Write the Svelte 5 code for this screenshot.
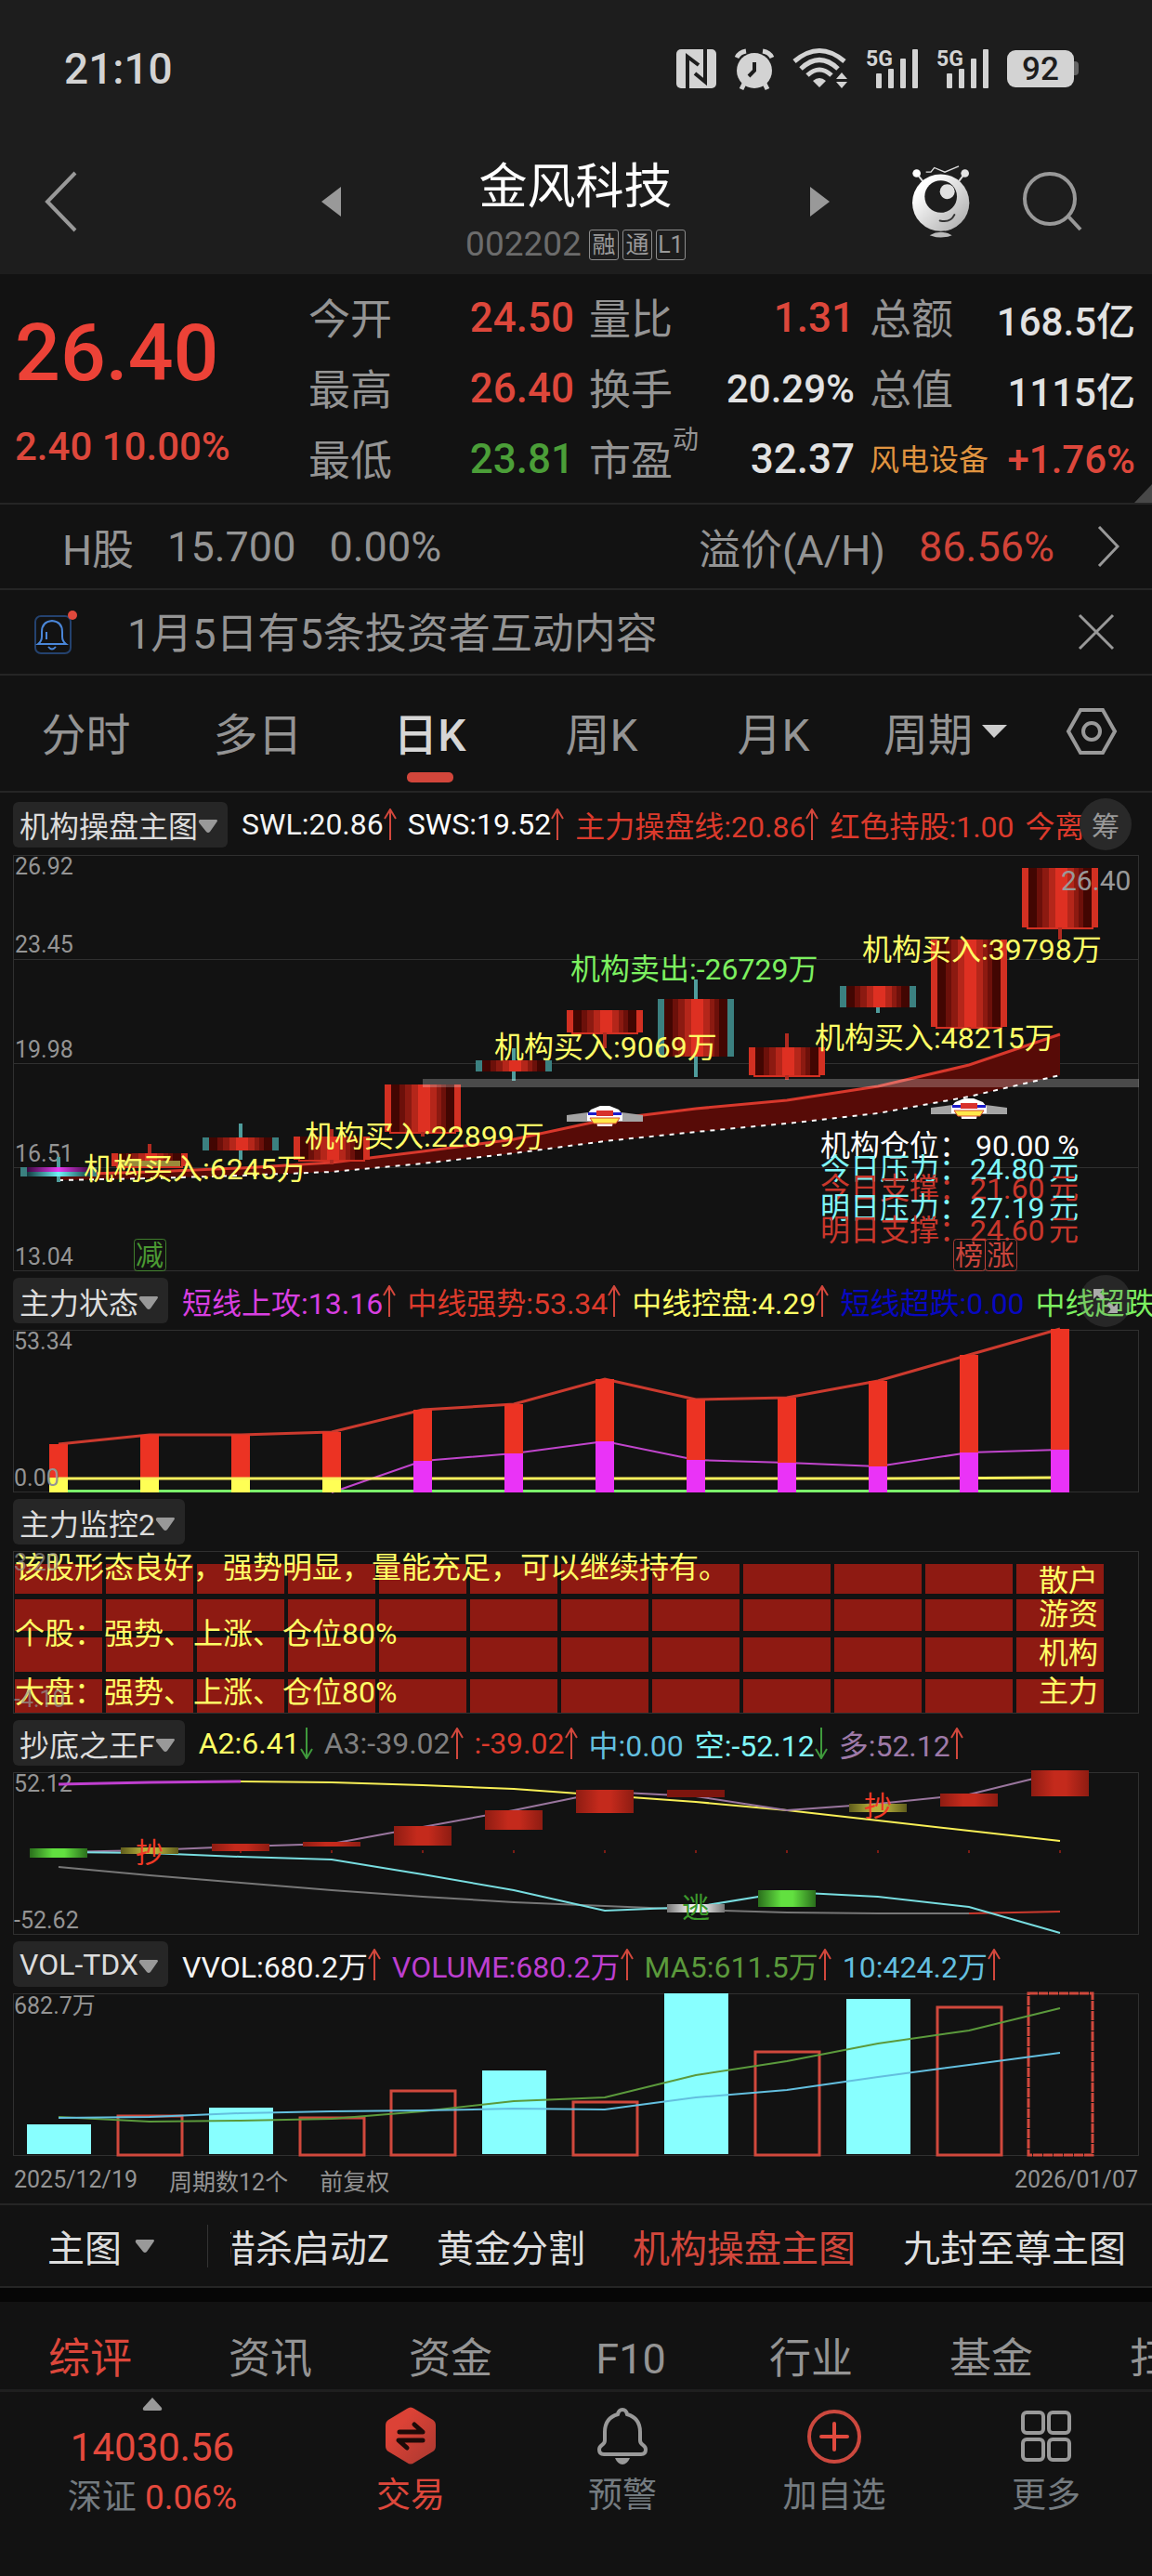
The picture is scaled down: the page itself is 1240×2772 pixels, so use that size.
<script lang="ts">
	type Arrow = 'up' | 'down' | '';
	type Reading = { text: string; color: string; arrow: Arrow };

	const quotes = [
		{ label: '今开', value: '24.50', tone: 'red' },
		{ label: '量比', value: '1.31', tone: 'red' },
		{ label: '总额', value: '168.5亿', tone: 'mid' },
		{ label: '最高', value: '26.40', tone: 'red' },
		{ label: '换手', value: '20.29%', tone: 'mid' },
		{ label: '总值', value: '1115亿', tone: 'mid' },
		{ label: '最低', value: '23.81', tone: 'green' },
		{ label: '市盈', sup: '动', value: '32.37', tone: '' },
		{ label: '风电设备', sector: true, value: '+1.76%', tone: 'red mid' }
	];

	const periods = ['分时', '多日', '日K', '周K', '月K'];
	const presets = ['猎杀启动Z', '黄金分割', '机构操盘主图', '九封至尊主图'];
	const sections = ['综评', '资讯', '资金', 'F10', '行业', '基金', '扫雷'];

	const mainReadings: Reading[] = [
		{ text: 'SWL:20.86', color: '#f4f4f4', arrow: 'up' },
		{ text: 'SWS:19.52', color: '#fff', arrow: 'up' },
		{ text: '主力操盘线:20.86', color: '#dc3a2c', arrow: 'up' },
		{ text: '红色持股:1.00', color: '#dc3a2c', arrow: '' },
		{ text: '今离', color: '#dc3a2c', arrow: '' }
	];
	const stateReadings: Reading[] = [
		{ text: '短线上攻:13.16', color: '#d83fe0', arrow: 'up' },
		{ text: '中线强势:53.34', color: '#dc3a2c', arrow: 'up' },
		{ text: '中线控盘:4.29', color: '#ffff66', arrow: 'up' },
		{ text: '短线超跌:0.00', color: '#0808c0', arrow: '' },
		{ text: '中线超跌', color: '#7cf060', arrow: '' }
	];
	const bottomReadings: Reading[] = [
		{ text: 'A2:6.41', color: '#ffff66', arrow: 'down' },
		{ text: 'A3:-39.02', color: '#808080', arrow: 'up' },
		{ text: ':-39.02', color: '#dc3a2c', arrow: 'up' },
		{ text: '中:0.00', color: '#63bfdf', arrow: '' },
		{ text: '空:-52.12', color: '#7ff6f8', arrow: 'down' },
		{ text: '多:52.12', color: '#9e7aa8', arrow: 'up' }
	];
	const volReadings: Reading[] = [
		{ text: 'VVOL:680.2万', color: '#f4f4f4', arrow: 'up' },
		{ text: 'VOLUME:680.2万', color: '#bd3fd0', arrow: 'up' },
		{ text: 'MA5:611.5万', color: '#5b9a3c', arrow: 'up' },
		{ text: '10:424.2万', color: '#63bfdf', arrow: 'up' }
	];

	// every chart shares the same twelve columns
	const cx = (i: number) => 49 + 98 * i;
	const line = (ys: number[], from = 0) => ys.map((y, i) => `${cx(i + from)},${y}`).join(' ');

	// [body top, body bottom, wick top, wick bottom, rising]
	const candles: [number, number, number, number, boolean][] = [
		[336, 346, 325, 352, false],
		[321, 335, 311, 335, true],
		[304, 318, 289, 328, false],
		[303, 328, 295, 333, true],
		[247, 298, 247, 303, true],
		[221, 233, 208, 243, false],
		[167, 191, 167, 208, true],
		[155, 217, 134, 239, false],
		[207, 237, 192, 242, true],
		[141, 164, 141, 170, false],
		[91, 185, 91, 190, true],
		[14, 78, 14, 91, true]
	];
	const upper = [344, 341, 337, 331, 319, 306, 285, 273, 264, 249, 226, 193];
	const lower = [350, 348, 345, 341, 332, 321, 308, 298, 289, 278, 260, 237];
	const band = `${line(upper)} ${lower.map((y, i) => `${cx(i)},${y}`).reverse().join(' ')}`;

	const axis = [
		{ y: 21, text: '26.92' },
		{ y: 105, text: '23.45' },
		{ y: 218, text: '19.98' },
		{ y: 330, text: '16.51' },
		{ y: 441, text: '13.04' }
	];
	const flows = [
		{ x: 76, y: 349, text: '机构买入:6245万' },
		{ x: 314, y: 314, text: '机构买入:22899万' },
		{ x: 518, y: 218, text: '机构买入:9069万' },
		{ x: 600, y: 134, text: '机构卖出:-26729万', sell: true },
		{ x: 914, y: 113, text: '机构买入:39798万' },
		{ x: 863, y: 208, text: '机构买入:48215万' }
	];
	const levels = [
		{ y: 349, label: '今日压力：', value: '24.80', color: '#7ff6f8' },
		{ y: 370, label: '今日支撑：', value: '21.60', color: '#c9372c' },
		{ y: 391, label: '明日压力：', value: '27.19', color: '#7ff6f8' },
		{ y: 415, label: '明日支撑：', value: '24.60', color: '#c9372c' }
	];
	const marks = [
		{ x: 130, text: '减', color: '#4b9a33' },
		{ x: 1012, text: '榜', color: '#c9453c' },
		{ x: 1046, text: '涨', color: '#c9453c' }
	];

	const strong = [123, 113, 113, 110, 86, 80, 53, 75, 73, 55, 27, -1];
	const attack = [141, 133, 120, 140, 143, 147, 132, 129];

	const heat = [
		{ y: 14, h: 32 },
		{ y: 52, h: 34 },
		{ y: 93, h: 37 },
		{ y: 138, h: 36 }
	];
	const heatLabels = [
		{ y: 43, text: '散户' },
		{ y: 79, text: '游资' },
		{ y: 121, text: '机构' },
		{ y: 162, text: '主力' }
	];

	const boxes = [
		{ i: 0, y: 82, h: 10, fill: 'green' },
		{ i: 1, y: 81, h: 7, fill: 'olive' },
		{ i: 2, y: 77, h: 8, fill: 'red' },
		{ i: 3, y: 75, h: 5, fill: 'red' },
		{ i: 4, y: 58, h: 21, fill: 'red' },
		{ i: 5, y: 41, h: 21, fill: 'red' },
		{ i: 6, y: 19, h: 25, fill: 'red' },
		{ i: 7, y: 19, h: 8, fill: 'dark' },
		{ i: 7, y: 142, h: 9, fill: 'white' },
		{ i: 8, y: 127, h: 18, fill: 'green' },
		{ i: 9, y: 34, h: 9, fill: 'olive' },
		{ i: 10, y: 23, h: 14, fill: 'red' },
		{ i: 11, y: -2, h: 28, fill: 'red' }
	];
	const bull = [86, 84, 80, 77, 59, 41, 21, 26, 41, 34, 24, 0];
	const bear = [86, 87, 91, 94, 110, 127, 149, 145, 129, 134, 145, 173];
	const a2 = [10, 11, 14, 18, 25, 32, 41, 52, 63, 74];
	const a3 = [102, 111, 119, 127, 134, 140, 144, 148, 151, 152, 152];

	const volumes = [
		{ top: 141, up: false },
		{ top: 132, up: true },
		{ top: 123, up: false },
		{ top: 134, up: true },
		{ top: 105, up: true },
		{ top: 83, up: false },
		{ top: 117, up: true },
		{ top: 0, up: false },
		{ top: 63, up: true },
		{ top: 6, up: false },
		{ top: 15, up: true },
		{ top: 0, up: true }
	];
	const ma5 = [133, 138, 137, 135, 127, 116, 112, 88, 73, 54, 40, 16];
	const ma10 = [134, 133, 129, 127, 126, 124, 125, 112, 104, 90, 77, 64];
</script>

{#snippet readings(items: Reading[])}
	<p class="readings">
		{#each items as item}
			<span style:color={item.color}
				>{item.text}{#if item.arrow}<svg class="arrow {item.arrow}" width="14" height="34" viewBox="0 0 14 34"
						><path d="M7 34V1M1 11L7 1l6 10" /></svg
					>{/if}</span
			>
		{/each}
	</p>
{/snippet}

{#snippet picker(name: string)}
	<button class="picker" type="button"
		>{name}<svg width="22" height="16" viewBox="0 0 22 16"><path d="M2 1h18q2 1 0 3l-7 10q-2 2-4 0L1 4q-1-2 1-3" /></svg></button
	>
{/snippet}

{#snippet signal()}
	<svg width="57" height="44" viewBox="0 0 57 44">
		<text class="net" x="0" y="19">5G</text>
		<rect x="11" y="27" width="6" height="16" rx="1" />
		<rect x="24" y="22" width="6" height="21" rx="1" />
		<rect x="37" y="11" width="6" height="32" rx="1" />
		<rect x="50" y="1" width="6" height="42" rx="1" />
	</svg>
{/snippet}

<main>
	<header>
		<div class="status">
			<time>21:10</time>
			<div class="status-icons">
				<svg width="43" height="42" viewBox="0 0 43 42">
					<rect width="43" height="42" rx="5" />
					<path class="cut" d="M12 42V8l12 9M31 0v35L20 26" />
				</svg>
				<svg class="alarm" width="44" height="44" viewBox="0 0 44 44">
					<circle cx="22" cy="24" r="19" />
					<path class="stroke" d="M3 10q3-6 10-7M41 10q-3-6-10-7M11 38l-3 6M33 38l3 6" />
					<path class="cut" d="M22 15v9l-6 6" />
				</svg>
				<svg class="wifi" width="60" height="44" viewBox="0 0 60 44">
					<path class="arc" d="M2 14Q29-9 56 14M9 22Q29 3 49 22M16 29Q29 17 42 29" />
					<path d="M22 35q7-6 14 0l-7 7zM53 26l6 7H47zM47 36h12l-6 7z" />
				</svg>
				{@render signal()}
				{@render signal()}
				<svg class="battery" width="77" height="40" viewBox="0 0 77 40">
					<rect x="66" y="12" width="11" height="15" rx="4" fill="#666" />
					<rect width="72" height="40" rx="9" />
					<text x="36" y="32">92</text>
				</svg>
			</div>
		</div>
		<nav class="title-bar">
			<div class="side">
				<button class="back" type="button" aria-label="返回">
					<svg width="36" height="66" viewBox="0 0 36 66"><path class="thin" d="M33 2L3 33l30 31" /></svg>
				</button>
				<button type="button" aria-label="上一只">
					<svg width="21" height="32" viewBox="0 0 21 32"><path fill="#999" d="M21 0v32L0 16z" /></svg>
				</button>
			</div>
			<div class="stock">
				<h1>金风科技</h1>
				<p>002202<i>融</i><i>通</i><i>L1</i></p>
			</div>
			<div class="side right">
				<button type="button" aria-label="下一只">
					<svg width="21" height="32" viewBox="0 0 21 32"><path fill="#999" d="M0 0v32l21-16z" /></svg>
				</button>
				<button class="robot" type="button" aria-label="助手">
					<svg width="62" height="78" viewBox="0 0 186 233">
						<defs>
							<linearGradient id="robot" x1="0" y1="0" x2="1" y2="1">
								<stop offset="0.2" stop-color="#fff" /><stop offset="0.9" stop-color="#b0b0b0" />
							</linearGradient>
						</defs>
						<path d="M14 25l20 26M170 25l-20 26" stroke="#ddd" stroke-width="6" />
						<path d="M44 21h16l11-14 34 14 45-19" fill="none" stroke="#ddd" stroke-width="4" />
						<circle cx="14" cy="25" r="13" fill="#fff" />
						<circle cx="170" cy="25" r="13" fill="#e4e4e4" />
						<circle cx="92" cy="120" r="92" fill="url(#robot)" />
						<circle cx="92" cy="100" r="52" fill="#1d1d1d" />
						<circle cx="113" cy="84" r="24" fill="#e0e0e0" />
						<path d="M89 178q34 8 47-19" fill="none" stroke="#333" stroke-width="6" stroke-linecap="round" />
						<path d="M56 225q36-20 72 0-36 14-72 0" fill="#bbb" />
					</svg>
				</button>
				<button type="button" aria-label="搜索">
					<svg width="66" height="66" viewBox="0 0 66 66">
						<circle class="thin" cx="30" cy="30" r="27" />
						<path class="thin" d="M50 49l13 14" />
					</svg>
				</button>
			</div>
		</nav>
	</header>

	<section class="quote">
		<div class="price">
			<strong>26.40</strong>
			<span>2.40 10.00%</span>
		</div>
		<dl>
			{#each quotes as q}
				<div>
					<dt class:sector={q.sector}>{q.label}{#if q.sup}<sup>{q.sup}</sup>{/if}</dt>
					<dd class={q.tone}>{q.value}</dd>
				</div>
			{/each}
		</dl>
	</section>

	<a class="premium" href="#ah">
		<span>H股</span><span>15.700</span><span>0.00%</span>
		<span class="ratio">溢价(A/H)</span><b>86.56%</b>
		<svg width="24" height="44" viewBox="0 0 24 44"><path class="thin" d="M2 1l20 21L2 43" /></svg>
	</a>

	<div class="notice">
		<svg width="46" height="50" viewBox="0 0 46 50">
			<rect x="1" y="8" width="38" height="40" rx="6" fill="none" stroke="#24426f" stroke-width="2" />
			<path d="M4 38q4-3 4-8v-5q0-11 11-12 11 1 11 12v5q0 5 4 8zM15 41q4 5 8 0M13 25v8" fill="none" stroke="#4a86d8" stroke-width="2" />
			<circle cx="41" cy="7" r="5" fill="#e0483c" />
		</svg>
		<span>1月5日有5条投资者互动内容</span>
		<button type="button" aria-label="关闭">
			<svg width="40" height="40" viewBox="0 0 40 40"><path class="thin" d="M2 2l36 36M38 2L2 38" /></svg>
		</button>
	</div>

	<nav class="periods">
		{#each periods as p}
			<button type="button" class:active={p === '日K'}>{p}</button>
		{/each}
		<button type="button">周期<svg width="27" height="14" viewBox="0 0 27 14"><path fill="#ccc" d="M0 0h27L13 14z" /></svg></button>
		<button class="settings" type="button" aria-label="设置">
			<svg width="56" height="50" viewBox="0 0 56 50">
				<path class="thin" d="M16 2h24l13 23-13 23H16L3 25z" />
				<circle class="thin" cx="28" cy="25" r="9" />
			</svg>
		</button>
	</nav>

	<section class="panel main-panel">
		<div class="panel-head">
			{@render picker('机构操盘主图')}
			{@render readings(mainReadings)}
			<button class="round" type="button">筹</button>
		</div>
		<svg class="chart" viewBox="0 0 1212 448">
			<defs>
				<linearGradient id="candle">
					<stop offset="0" stop-color="#420602" /><stop offset="0.13" stop-color="#420602" />
					<stop offset="0.13" stop-color="#6c100a" /><stop offset="0.22" stop-color="#6c100a" />
					<stop offset="0.22" stop-color="#8c1a11" /><stop offset="0.32" stop-color="#8c1a11" />
					<stop offset="0.32" stop-color="#b4261a" /><stop offset="0.42" stop-color="#b4261a" />
					<stop offset="0.42" stop-color="#de3022" /><stop offset="0.62" stop-color="#de3022" />
					<stop offset="0.62" stop-color="#b4261a" /><stop offset="0.72" stop-color="#b4261a" />
					<stop offset="0.72" stop-color="#8c1a11" /><stop offset="0.8" stop-color="#8c1a11" />
					<stop offset="0.8" stop-color="#6c100a" /><stop offset="0.87" stop-color="#6c100a" />
					<stop offset="0.87" stop-color="#420602" />
				</linearGradient>
				<linearGradient id="violet">
					<stop offset="0" stop-color="#3c0840" /><stop offset="0.5" stop-color="#e63cf0" /><stop offset="1" stop-color="#3c0840" />
				</linearGradient>
				<linearGradient id="aqua">
					<stop offset="0" stop-color="#123c40" /><stop offset="0.5" stop-color="#70f4f8" /><stop offset="1" stop-color="#123c40" />
				</linearGradient>
			</defs>
			<rect class="frame" x="0.5" y="0.5" width="1211" height="447" />
			<path class="grid" d="M0 112.5h1212M0 224.5h1212M0 336.5h1212" />
			{#each axis as a}<text class="axis" x="2" y={a.y}>{a.text}</text>{/each}

			<polygon points={band} fill="#570b07" />
			<polyline points={line(upper)} stroke="#d8382c" stroke-width="3" />
			<polyline points={line(lower)} stroke="#fff" stroke-width="2" stroke-dasharray="5 6" />

			{#each candles as [top, bottom, high, low, rising], i}
				<rect x={cx(i) - 41} y={top} width="82" height={bottom - top} fill={rising ? '#d23022' : '#3b8080'} />
				<rect x={cx(i) - 34} y={top} width="68" height={bottom - top} fill="url(#candle)" />
				{#if rising}<path d="M{cx(i) - 36} {bottom + 1}h72" stroke="#d23022" stroke-width="2" />{/if}
				<path d="M{cx(i)} {high}V{top}M{cx(i)} {bottom}V{low}" stroke={rising ? '#b02a20' : '#4f9c9c'} stroke-width="4" />
			{/each}
			<rect x="15" y="336" width="68" height="5" fill="url(#violet)" />
			<rect x="15" y="341" width="68" height="5" fill="url(#aqua)" />
			<rect x="116" y="329" width="64" height="6" fill="#9a8a3a" />
			<rect x="441" y="241" width="771" height="9" fill="#fff" opacity="0.24" />

			{#each [{ i: 6, y: 270 }, { i: 10, y: 262 }] as ship}
				<g transform="translate({cx(ship.i)} {ship.y})">
					<path d="M-41 10l23-3h36l23 3v7h-82z" fill="#a4a4a4" />
					<path d="M-5 0H5l10 4 4 5v7H9l-1 6H-8l-1-6h-10V9l4-5z" fill="#fff" />
					<path d="M-18 7h36v3h-36z" fill="#1c1ccc" />
					<path d="M-9 5H9v6H-9z" fill="#d8302c" />
					<path d="M-16 13h32l-4 6h-24z" fill="#ffe94a" stroke="#d84a2c" stroke-width="1" />
				</g>
			{/each}

			{#each flows as f}<text class="note" class:sell={f.sell} x={f.x} y={f.y}>{f.text}</text>{/each}
			<text class="last" x="1128" y="38">26.40</text>

			<g fill="#fff"><text x="869" y="324">机构仓位：</text><text x="1036" y="324">90.00 %</text></g>
			{#each levels as l}
				<g fill={l.color}>
					<text x="869" y={l.y}>{l.label}</text>
					<text x="1030" y={l.y}>{l.value}</text>
					<text x="1115" y={l.y}>元</text>
				</g>
			{/each}
			{#each marks as m}
				<rect x={m.x + 0.5} y="413.5" width="34" height="34" rx="3" fill="none" stroke={m.color} opacity="0.8" />
				<text class="mark" x={m.x + 17} y="441" fill={m.color}>{m.text}</text>
			{/each}
		</svg>
	</section>

	<section class="panel">
		<div class="panel-head">
			{@render picker('主力状态')}
			{@render readings(stateReadings)}
			<button class="round expand" type="button" aria-label="展开">
				<svg width="30" height="30" viewBox="0 0 30 30"><path d="M2 2h11L9 6l5 5-3 3-5-5-4 4zM28 28H17l4-4-5-5 3-3 5 5 4-4z" fill="#aaa" /></svg>
			</button>
		</div>
		<svg class="chart" viewBox="0 0 1212 175">
			<rect class="frame" x="0.5" y="0.5" width="1211" height="174" />
			<polyline points={line(strong)} stroke="#cc3a2e" stroke-width="3" />
			<polyline points={line([175, ...attack], 3)} stroke="#c045cc" stroke-width="2" />
			<path d="M49 173.5H1127" stroke="#7cf06c" stroke-width="3" />
			{#each strong as y, i}
				<rect x={cx(i) - 10} {y} width="20" height={175 - y} fill="#ec3323" />
				{#if i < 4}
					<rect x={cx(i) - 10} y="159" width="20" height="16" fill="#ffff55" />
				{/if}
			{/each}
			<polyline points="49,160 931,160 1127,159" stroke="#fbf05c" stroke-width="3" />
			{#each attack as y, i}
				<rect x={cx(i + 4) - 10} {y} width="20" height={175 - y} fill="#ea33f7" />
			{/each}
			<text class="axis" x="1" y="21">53.34</text>
			<text class="axis" x="1" y="168">0.00</text>
		</svg>
	</section>

	<section class="panel">
		<div class="panel-head">{@render picker('主力监控2')}</div>
		<svg class="chart" viewBox="0 0 1212 175">
			<rect class="frame" x="0.5" y="0.5" width="1211" height="174" />
			{#each heat as row}
				{#each Array(12) as _, i}
					<rect x={2 + 98 * i} y={row.y} width="94" height={row.h} fill="#8e1a12" />
				{/each}
			{/each}
			<text class="note" x="2" y="29">该股形态良好，强势明显，量能充足，可以继续持有。</text>
			<text class="note" x="2" y="100">个股：强势、上涨、仓位80%</text>
			<text class="note" x="2" y="163">大盘：强势、上涨、仓位80%</text>
			{#each heatLabels as l}<text class="note" x="1104" y={l.y}>{l.text}</text>{/each}
			<text class="axis faded" x="1" y="21">3.20</text>
			<text class="axis faded" x="1" y="168">-4.10</text>
		</svg>
	</section>

	<section class="panel">
		<div class="panel-head">
			{@render picker('抄底之王F')}
			{@render readings(bottomReadings)}
		</div>
		<svg class="chart" viewBox="0 0 1212 175">
			<defs>
				{#each [['red', '#8e1c12', '#c42a1c'], ['green', '#2a6e1c', '#62e040'], ['olive', '#5f5c1c', '#b8b23c'], ['white', '#777', '#f0f0f0'], ['dark', '#7c150e', '#7c150e']] as [id, edge, mid]}
					<linearGradient id="box-{id}">
						<stop offset="0" stop-color={edge} /><stop offset="0.4" stop-color={mid} />
						<stop offset="0.6" stop-color={mid} /><stop offset="1" stop-color={edge} />
					</linearGradient>
				{/each}
			</defs>
			<rect class="frame" x="0.5" y="0.5" width="1211" height="174" />
			<text class="axis" x="1" y="21">52.12</text>
			<text class="axis" x="1" y="168">-52.62</text>
			<polyline points={line([13, 11, 10])} stroke="#c03fd0" stroke-width="3" />
			<polyline points={line(a2, 2)} stroke="#f8ef56" stroke-width="2" />
			<polyline points={line(a3)} stroke="#777" stroke-width="2" />
			<polyline points={line([152, 150], 10)} stroke="#cc3a2e" stroke-width="2" />
			<polyline points={line(bull)} stroke="#9a769e" stroke-width="2" />
			<polyline points={line(bear)} stroke="#78dde0" stroke-width="2" />
			{#each Array(10) as _, i}<rect x={cx(i + 2) - 1} y="84" width="2" height="3" fill="#7c1c14" />{/each}
			{#each boxes as b}
				<rect x={cx(b.i) - 31} y={b.y} width="62" height={b.h} fill="url(#box-{b.fill})" />
			{/each}
			<text class="signal" x={cx(1)} y="97" fill="#f03a26">抄</text>
			<text class="signal" x={cx(9)} y="47" fill="#f03a26">抄</text>
			<text class="signal" x={cx(7)} y="156" fill="#3c9a2c">逃</text>
		</svg>
	</section>

	<section class="panel">
		<div class="panel-head">
			{@render picker('VOL-TDX')}
			{@render readings(volReadings)}
		</div>
		<svg class="chart" viewBox="0 0 1212 175">
			<rect class="frame" x="0.5" y="0.5" width="1211" height="174" />
			{#each volumes as v, i}
				{#if v.up}
					<rect x={cx(i) - 34} y={v.top} width="69" height={174 - v.top} fill="none" stroke="#d0483c" stroke-width="3" stroke-dasharray={i === 11 ? '10 1' : null} />
				{:else}
					<rect x={cx(i) - 34} y={v.top} width="69" height={173 - v.top} fill="#88ffff" />
				{/if}
			{/each}
			<polyline points={line(ma5)} stroke="#5b9a3c" stroke-width="2" />
			<polyline points={line(ma10)} stroke="#63bfdf" stroke-width="2" />
			<text class="axis" x="1" y="22">682.7万</text>
		</svg>
	</section>

	<footer class="dates">
		<span>2025/12/19</span><span>周期数12个</span><span>前复权</span>
		<time>2026/01/07</time>
	</footer>

	<nav class="presets">
		<button class="target" type="button"
			>主图<svg width="26" height="16" viewBox="0 0 22 16"><path fill="#999" d="M2 1h18q2 1 0 3l-7 10q-2 2-4 0L1 4q-1-2 1-3" /></svg></button
		>
		<div class="strip">
			{#each presets as p}
				<button type="button" class:active={p === '机构操盘主图'}>{p}</button>
			{/each}
		</div>
	</nav>

	<nav class="sections">
		{#each sections as s}
			<a href="#{s}" class:active={s === '综评'}>{s}</a>
		{/each}
	</nav>

	<nav class="dock">
		<button class="index" type="button">
			<svg width="22" height="14" viewBox="0 0 22 14"><path fill="#999" d="M11 0l10 11q1 3-2 3H3q-3 0-2-3z" /></svg>
			<b>14030.56</b>
			<span>深证 <em>0.06%</em></span>
		</button>
		<button class="active" type="button">
			<svg width="62" height="62" viewBox="0 0 62 62">
				<defs>
					<linearGradient id="trade" x1="0" y1="0" x2="1" y2="1">
						<stop offset="0.3" stop-color="#dc4236" /><stop offset="1" stop-color="#a83830" />
					</linearGradient>
				</defs>
				<path d="M27 2q4-3 8 0l20 12q3 2 3 6v22q0 4-3 6L35 60q-4 3-8 0L7 48q-3-2-3-6V20q0-4 3-6z" fill="url(#trade)" />
				<path d="M19 27h25L35 19M44 36H18l9 8" fill="none" stroke="#1d0a08" stroke-width="5" stroke-linecap="round" stroke-linejoin="round" />
			</svg>
			交易
		</button>
		<button type="button">
			<svg width="62" height="62" viewBox="0 0 62 62">
				<path d="M31 3q4 0 5 5 14 4 14 19v9q0 3 3 5 3 2 3 5 0 5-5 5H11q-5 0-5-5 0-3 3-5 3-2 3-5v-9Q12 12 26 8q1-5 5-5z" fill="none" stroke="#999" stroke-width="4" />
				<path d="M23 55h16q-3 7-8 7t-8-7" fill="#999" />
			</svg>
			预警
		</button>
		<button type="button">
			<svg width="62" height="62" viewBox="0 0 62 62">
				<circle cx="31" cy="32" r="27" fill="none" stroke="#cc483e" stroke-width="4" />
				<path d="M31 18v28M17 32h28" stroke="#e04a3e" stroke-width="4" stroke-linecap="round" />
			</svg>
			加自选
		</button>
		<button type="button">
			<svg width="62" height="62" viewBox="0 0 62 62" fill="none" stroke="#999" stroke-width="4">
				<rect x="6" y="6" width="22" height="22" rx="4" />
				<rect x="34" y="6" width="22" height="22" rx="4" />
				<rect x="6" y="35" width="22" height="22" rx="4" />
				<rect x="34" y="35" width="22" height="22" rx="4" />
			</svg>
			更多
		</button>
	</nav>
</main>

<style>
	:global(body) {
		background: #121212;
	}

	main {
		--red: #dd473b;
		--grey: #949494;
		--line: #252525;
		font-family: Roboto, 'Noto Sans CJK SC', sans-serif;
		color: var(--grey);
		background: #121212;
		min-height: 100vh;
		overflow: hidden;
	}

	h1,
	p,
	dl,
	dd {
		margin: 0;
	}

	i,
	em {
		font-style: normal;
	}

	svg {
		display: block;
		flex: none;
	}

	button {
		font: inherit;
		color: inherit;
		background: none;
		border: none;
		padding: 0;
		white-space: nowrap;
	}

	a {
		color: inherit;
		text-decoration: none;
	}

	.thin {
		fill: none;
		stroke: #999;
		stroke-width: 4;
	}

	header {
		background: #1d1d1d;
	}

	.status {
		display: flex;
		align-items: center;
		justify-content: space-between;
		height: 148px;
		padding: 0 79px 0 69px;
		color: #d3d3d3;
	}

	.status time {
		font-size: 46px;
		font-weight: 500;
	}

	.status-icons {
		display: flex;
		align-items: center;
		gap: 19px;
	}

	.status-icons svg {
		fill: #d3d3d3;
		overflow: visible;
	}

	.status-icons .cut {
		fill: none;
		stroke: #1d1d1d;
		stroke-width: 4;
	}

	.status-icons .stroke,
	.status-icons .arc {
		fill: none;
		stroke: #d3d3d3;
		stroke-width: 5;
	}

	.net {
		font-size: 23px;
		font-weight: 700;
	}

	.battery text {
		fill: #1d1d1d;
		font-size: 35px;
		font-weight: 500;
		text-anchor: middle;
	}

	.title-bar {
		display: grid;
		grid-template-columns: 367fr 505fr 368fr;
		height: 147px;
	}

	.side {
		display: flex;
		align-items: center;
		justify-content: space-between;
		padding: 0 0 10px 48px;
	}

	.side.right {
		justify-content: flex-start;
		padding-left: 0;
	}

	.robot {
		margin: 0 56px 0 auto;
	}

	.side.right button:last-child {
		margin-right: 74px;
	}

	.stock {
		text-align: center;
		padding-top: 22px;
	}

	h1 {
		color: #fff;
		font-size: 52px;
		font-weight: 400;
		line-height: 64px;
	}

	.stock p {
		display: flex;
		align-items: center;
		justify-content: center;
		gap: 4px;
		font-size: 37px;
		line-height: 58px;
		color: #6c6c6c;
	}

	.stock i {
		box-sizing: border-box;
		width: 32px;
		border: 1px solid #8c8c8c;
		border-radius: 3px;
		color: #999;
		font-size: 25px;
		line-height: 31px;
	}

	.stock i:first-of-type {
		margin-left: 4px;
	}

	.quote {
		position: relative;
		display: flex;
		padding: 9px 18px 9px 16px;
		border-bottom: 2px solid var(--line);
	}

	.quote::after {
		content: '';
		position: absolute;
		right: 0;
		bottom: 0;
		border-left: 19px solid transparent;
		border-bottom: 20px solid #484848;
	}

	.price {
		width: 316px;
		color: var(--red);
		font-weight: 500;
	}

	.price strong {
		display: block;
		font-size: 86px;
		font-weight: 500;
		line-height: 152px;
		color: #ec4237;
	}

	.price span {
		display: block;
		font-size: 42px;
		line-height: 50px;
	}

	dl {
		flex: 1;
		display: grid;
		grid-template-columns: repeat(3, 1fr);
		grid-auto-rows: 76px;
		column-gap: 16px;
	}

	dl div {
		display: flex;
		align-items: center;
		justify-content: space-between;
		white-space: nowrap;
	}

	dt {
		position: relative;
		padding-bottom: 4px;
		font-size: 45px;
	}

	dt.sector {
		font-size: 32px;
		color: #e09440;
	}

	sup {
		position: absolute;
		left: 100%;
		top: 0;
		font-size: 28px;
		line-height: 28px;
	}

	dd {
		font-size: 44px;
		font-weight: 500;
		color: #e2e2e2;
	}

	dd.red {
		color: var(--red);
	}

	dd.green {
		color: #4b9e38;
	}

	dd.mid {
		font-size: 42px;
	}

	.premium {
		display: flex;
		align-items: center;
		gap: 36px;
		height: 90px;
		padding: 0 35px 0 67px;
		border-bottom: 2px solid var(--line);
		font-size: 45px;
	}

	.premium .ratio {
		margin-left: auto;
	}

	.premium b {
		color: #d04338;
		font-weight: 400;
		margin-right: 10px;
	}

	.notice {
		display: flex;
		align-items: center;
		height: 90px;
		padding: 0 40px 0 37px;
		border-bottom: 2px solid var(--line);
		font-size: 45px;
	}

	.notice span {
		margin: 0 auto 0 54px;
		padding-bottom: 4px;
	}

	.notice .thin,
	.premium .thin {
		stroke-width: 3;
	}

	.periods {
		display: grid;
		grid-template-columns: repeat(6, 185fr) 130fr;
		height: 124px;
		border-bottom: 2px solid var(--line);
		font-size: 48px;
	}

	.periods button {
		position: relative;
		display: flex;
		align-items: center;
		justify-content: center;
		gap: 10px;
		padding-bottom: 4px;
	}

	.periods .active {
		color: #d6d6d6;
		font-weight: 500;
	}

	.periods .active::after {
		content: '';
		position: absolute;
		bottom: 9px;
		width: 50px;
		height: 11px;
		border-radius: 5px;
		background: #d2463b;
	}

	.panel {
		padding: 0 14px;
	}

	.panel-head {
		position: relative;
		display: flex;
		align-items: center;
		gap: 15px;
		height: 63px;
	}

	.main-panel .panel-head {
		height: 66px;
		padding-top: 1px;
	}

	.picker {
		display: flex;
		align-items: center;
		height: 49px;
		padding: 0 10px 0 7px;
		border-radius: 6px;
		background: #262626;
		color: #dcdcdc;
		font-size: 32px;
	}

	.picker svg {
		margin-top: 4px;
	}

	.picker path {
		fill: #999;
	}

	.readings {
		display: flex;
		gap: 12px;
		font-size: 32px;
		white-space: nowrap;
	}

	.readings span {
		display: flex;
		align-items: center;
	}

	.arrow {
		fill: none;
		stroke: #d2473c;
		stroke-width: 2;
	}

	.arrow.down {
		stroke: #3f9a3c;
		transform: rotate(180deg);
	}

	.round {
		position: absolute;
		right: 8px;
		width: 56px;
		height: 56px;
		border-radius: 50%;
		background: #292929;
		color: #999;
		font-size: 30px;
	}

	.expand {
		background: #66666640;
	}

	.round svg {
		margin: 0 auto;
	}

	.chart {
		width: 100%;
		height: auto;
		overflow: visible;
		font-size: 32px;
	}

	.chart polyline {
		fill: none;
	}

	.frame,
	.grid {
		fill: none;
		stroke: #303030;
	}

	.axis {
		fill: #949494;
		font-size: 25px;
	}

	.faded {
		opacity: 0.7;
	}

	.note {
		fill: #ffff66;
	}

	.note.sell {
		fill: #7cf060;
	}

	.last {
		fill: #999;
		font-size: 30px;
	}

	.mark,
	.signal {
		font-size: 30px;
		text-anchor: middle;
	}

	.dates {
		display: flex;
		align-items: center;
		gap: 34px;
		height: 51px;
		padding: 0 15px;
		border-bottom: 2px solid var(--line);
		font-size: 25px;
	}

	.dates time {
		margin-left: auto;
	}

	.presets {
		display: flex;
		align-items: center;
		height: 87px;
		border-bottom: 2px solid var(--line);
		font-size: 40px;
		color: #dedede;
	}

	.presets .active {
		color: #d2473c;
	}

	.target {
		display: flex;
		align-items: center;
		gap: 12px;
		height: 46px;
		padding: 0 54px 0 51px;
		border-right: 1px solid #333;
	}

	.strip {
		display: flex;
		flex: 1;
		gap: 51px;
		margin-left: 24px;
		overflow: hidden;
	}

	.strip button:first-child {
		margin-left: -13px;
	}

	.sections {
		display: flex;
		height: 92px;
		padding-top: 2px;
		border-top: 15px solid #060606;
		border-bottom: 3px solid #1f1f1f;
		font-size: 45px;
	}

	.sections a {
		flex: 0 0 194px;
		text-align: center;
		line-height: 120px;
	}

	.active {
		color: var(--red);
	}

	.dock {
		display: grid;
		grid-template-columns: 328fr repeat(4, 228fr);
		padding: 6px 0 40px;
		font-size: 37px;
	}

	.dock button {
		display: flex;
		flex-direction: column;
		align-items: center;
		gap: 8px;
		line-height: 52px;
		padding-top: 10px;
		color: #747b80;
	}

	.dock .active {
		color: var(--red);
	}

	.dock .index {
		gap: 0;
		padding-top: 0;
	}

	.index b {
		margin-top: 12px;
		color: #e4493d;
		font-size: 42px;
		font-weight: 400;
		line-height: 56px;
	}

	.index em {
		color: #e4493d;
	}
</style>
